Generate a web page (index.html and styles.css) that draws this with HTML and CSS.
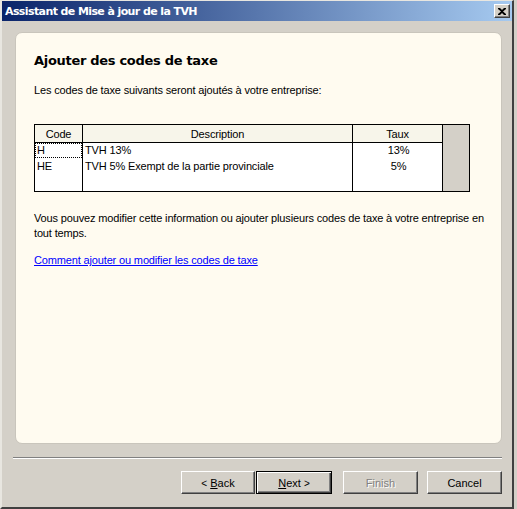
FILE: index.html
```html
<!DOCTYPE html>
<html lang="fr">

<head>
    <meta charset="UTF-8">
    <title>Assistant de Mise à jour de la TVH</title>
    <link rel="stylesheet" href="styles.css">
</head>

<body>
    <div class="window">
        <div class="title-bar">
            <span class="title-text">Assistant de Mise à jour de la TVH</span>
            <button class="close-btn">
                <svg width="8" height="7" viewBox="0 0 8 7">
                    <path d="M0 0h2l2 2 2-2h2v1l-3 2.5 3 2.5v1h-2l-2-2-2 2h-2v-1l3-2.5-3-2.5z" fill="#000" />
                </svg>
            </button>
        </div>
        <div class="body">
            <div class="panel">
                <h1>Ajouter des codes de taxe</h1>
                <p class="intro">Les codes de taxe suivants seront ajoutés à votre entreprise:</p>

                <div class="grid">
                    <table>
                        <tr class="head">
                            <th class="col-code">Code</th>
                            <th class="col-desc">Description</th>
                            <th class="col-rate">Taux</th>
                        </tr>
                        <tr>
                            <td class="code"><span class="focus">H</span></td>
                            <td>TVH 13%</td>
                            <td class="rate">13%</td>
                        </tr>
                        <tr>
                            <td class="code"><span class="plain">HE</span></td>
                            <td>TVH 5% Exempt de la partie provinciale</td>
                            <td class="rate">5%</td>
                        </tr>
                        <tr class="filler">
                            <td></td>
                            <td></td>
                            <td></td>
                        </tr>
                    </table>
                    <div class="grid-rest"></div>
                </div>

                <p class="note">Vous pouvez modifier cette information ou ajouter plusieurs codes de taxe à votre entreprise en<br>tout temps.</p>
                <a href="#" class="help-link">Comment ajouter ou modifier les codes de taxe</a>
            </div>

            <div class="separator"></div>

            <div class="buttons">
                <button class="btn back"><span class="arrow">&lt;</span> <u>B</u>ack</button>
                <button class="btn default"><u>N</u>ext <span class="arrow">&gt;</span></button>
                <button class="btn disabled finish">Finish</button>
                <button class="btn cancel">Cancel</button>
            </div>
        </div>
    </div>
</body>

</html>
```

FILE: styles.css
```css
body {
    margin: 0;
    background-color: #d4d0c8;
    font-family: "Liberation Sans", Arial, sans-serif;
    font-size: 11px;
    letter-spacing: -0.15px;
    color: #000;
}

.window {
    width: 510px;
    height: 506px;
    background-color: #d4d0c8;
    border-top: 1px solid #e8e6e0;
    border-left: 2px solid #e8e6e0;
    border-right: 2px solid #404040;
    border-bottom: 2px solid #404040;
}

.title-bar {
    height: 20px;
    display: flex;
    align-items: center;
    justify-content: space-between;
    padding: 0 2px 0 3px;
    background: linear-gradient(to right, #0a246a, #a6caf0);
}

.title-text {
    color: #fff;
    font-weight: bold;
    font-size: 11px;
    font-family: "DejaVu Sans", sans-serif;
    letter-spacing: -0.6px;
}

.close-btn {
    width: 16px;
    height: 14px;
    padding: 0;
    display: flex;
    align-items: center;
    justify-content: center;
    background-color: #d4d0c8;
    border: 1px solid;
    border-color: #fff #404040 #404040 #fff;
    box-shadow: inset -1px -1px 0 #808080;
}

.body {
    padding: 11px 10px 0 13px;
}

.panel {
    height: 410px;
    background-color: #fffbf0;
    border: 1px solid #c9c5bc;
    border-radius: 7px;
    padding: 0 18px;
}

h1 {
    font-family: "DejaVu Sans", sans-serif;
    font-size: 13px;
    font-weight: bold;
    letter-spacing: -0.3px;
    margin: 20px 0 0 0;
    line-height: 16px;
}

.intro {
    margin: 14px 0 0 0;
    line-height: 14px;
}

.grid {
    margin-top: 27px;
    display: flex;
    width: 434px;
    height: 66px;
    border: 1px solid #000;
}

table {
    border-collapse: collapse;
    width: 408px;
    height: 66px;
    background-color: #fff;
    border-right: 1px solid #000;
}

th {
    font-weight: normal;
    background-color: #f7f5ea;
    height: 17px;
    padding: 0;
    border-bottom: 1px solid #000;
    border-right: 1px solid #000;
}

th.col-rate {
    border-right: none;
}

.col-code {
    width: 47px;
}

.col-desc {
    width: 269px;
}

td {
    padding: 0 0 0 2px;
    height: 16px;
    line-height: 15px;
    border-right: 1px solid #000;
    vertical-align: top;
}

td:last-child {
    border-right: none;
}

td.code {
    padding: 0;
}

.focus,
.plain {
    display: block;
    padding-left: 2px;
}

.focus {
    outline: 1px dotted #000;
    outline-offset: -1px;
}

td.rate {
    text-align: center;
}

.filler td {
    height: auto;
}

.grid-rest {
    flex: 1;
    background-color: #d4d0c8;
}

.note {
    margin: 19px 0 0 0;
    line-height: 15px;
    white-space: nowrap;
}

.help-link {
    display: inline-block;
    margin-top: 12px;
    color: #0000ff;
    line-height: 14px;
}

.separator {
    margin: 13px 0 0 -2px;
    border-top: 1px solid #808080;
    border-bottom: 1px solid #fff;
}

.buttons {
    display: flex;
    justify-content: flex-end;
    margin-top: 12px;
}

.btn {
    width: 75px;
    height: 23px;
    padding: 0;
    font-family: "Liberation Sans", Arial, sans-serif;
    font-size: 11px;
    color: #000;
    background-color: #d4d0c8;
    border: 1px solid;
    border-color: #fff #404040 #404040 #fff;
    box-shadow: inset -1px -1px 0 #808080;
}

.btn.back {
    width: 74px;
}

.btn.default {
    width: 76px;
    margin-left: 1px;
    border: 1px solid #000;
    box-shadow: inset 1px 1px 0 #fff, inset -1px -1px 0 #404040, inset -2px -2px 0 #808080;
}

.btn.finish {
    margin-left: 11px;
}

.btn.cancel {
    margin-left: 9px;
}

.btn.disabled {
    color: #808080;
    text-shadow: 1px 1px 0 #fff;
}

.arrow {
    font-size: 10px;
}
```
